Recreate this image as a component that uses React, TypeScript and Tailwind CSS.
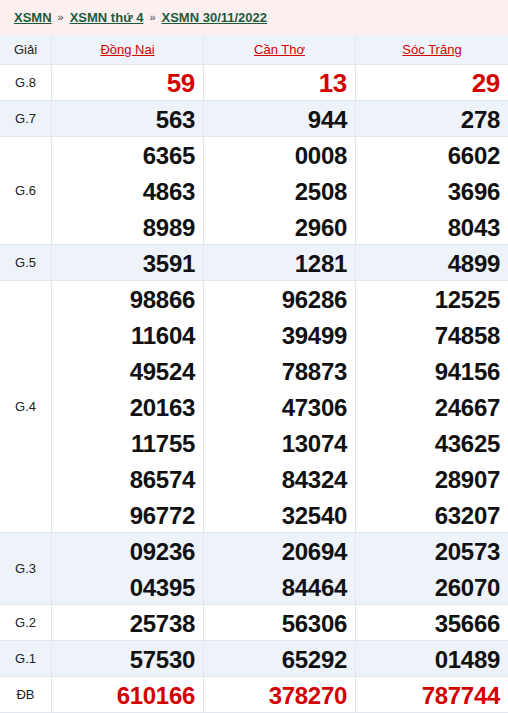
const provinces = ["Đồng Nai", "Cần Thơ", "Sóc Trăng"];

type Row = { label: string; red?: boolean; big?: boolean; values: string[][] };

const rows: Row[] = [
  { label: "G.8", red: true, big: true, values: [["59"], ["13"], ["29"]] },
  { label: "G.7", values: [["563"], ["944"], ["278"]] },
  {
    label: "G.6",
    values: [
      ["6365", "4863", "8989"],
      ["0008", "2508", "2960"],
      ["6602", "3696", "8043"],
    ],
  },
  { label: "G.5", values: [["3591"], ["1281"], ["4899"]] },
  {
    label: "G.4",
    values: [
      ["98866", "11604", "49524", "20163", "11755", "86574", "96772"],
      ["96286", "39499", "78873", "47306", "13074", "84324", "32540"],
      ["12525", "74858", "94156", "24667", "43625", "28907", "63207"],
    ],
  },
  {
    label: "G.3",
    values: [
      ["09236", "04395"],
      ["20694", "84464"],
      ["20573", "26070"],
    ],
  },
  { label: "G.2", values: [["25738"], ["56306"], ["35666"]] },
  { label: "G.1", values: [["57530"], ["65292"], ["01489"]] },
  { label: "ĐB", red: true, values: [["610166"], ["378270"], ["787744"]] },
];

export default function App() {
  return (
    <div className="w-[508px] h-[713px] overflow-hidden bg-white font-['Liberation_Sans',Arial,sans-serif]">
      <div className="h-[35px] bg-[#fbefef] flex items-center pl-[14px] text-[13px]">
        <a href="#" className="font-bold text-[#1e5a3a] underline">XSMN</a>
        <span className="mx-[6px] text-[#444] text-[11px]">»</span>
        <a href="#" className="font-bold text-[#1e5a3a] underline">XSMN thứ 4</a>
        <span className="mx-[6px] text-[#444] text-[11px]">»</span>
        <a href="#" className="font-bold text-[#1e5a3a] underline">XSMN 30/11/2022</a>
      </div>
      <div className="grid grid-cols-[52px_1fr_1fr_1fr] h-[30px] bg-[#eef2f9] border-b border-[#e3e6ec] text-[13px]">
        <div className="flex items-center justify-center border-r border-[#e3e6ec] text-[#222]">Giải</div>
        {provinces.map((p, i) => (
          <div
            key={p}
            className={`flex items-center justify-center ${i < 2 ? "border-r border-[#e3e6ec]" : ""}`}
          >
            <a href="#" className="text-[#d40000] underline">{p}</a>
          </div>
        ))}
      </div>
      {rows.map((row, ri) => (
        <div
          key={row.label}
          className={`grid grid-cols-[52px_1fr_1fr_1fr] shadow-[inset_0_-1px_0_#e3e6ec] ${
            ri % 2 === 1 ? "bg-[#eef2f9]" : "bg-white"
          }`}
        >
          <div className="flex items-center justify-center border-r border-[#e3e6ec] text-[13px] text-[#222]">
            {row.label}
          </div>
          {row.values.map((col, ci) => (
            <div
              key={ci}
              className={`flex flex-col items-end pr-[8px] ${ci < 2 ? "border-r border-[#e3e6ec]" : ""}`}
            >
              {col.map((v, k) => (
                <div
                  key={k}
                  className={`h-[36px] leading-[37px] font-bold tracking-[-0.3px] ${
                    row.big ? "text-[26px]" : "text-[24px]"
                  } ${row.red ? "text-[#d40000]" : "text-[#111]"}`}
                >
                  {v}
                </div>
              ))}
            </div>
          ))}
        </div>
      ))}
    </div>
  );
}
